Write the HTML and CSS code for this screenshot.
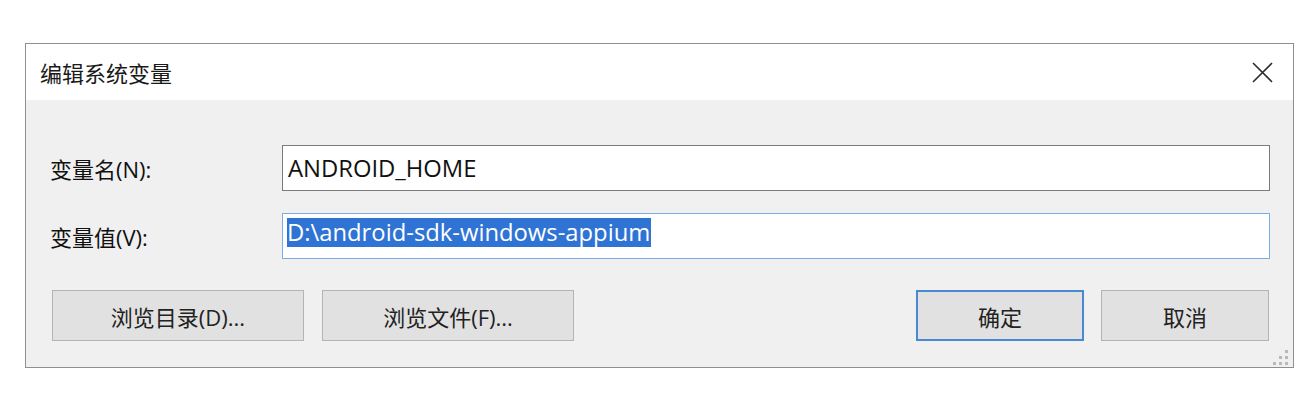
FILE: index.html
```html
<!DOCTYPE html>
<html lang="zh-CN">
<head>
  <meta charset="UTF-8" />
  <title>编辑系统变量</title>
  <link rel="stylesheet" href="styles.css">
</head>
<body>
  <div class="page">
    <div class="dialog">
      <!-- Barra de título -->
      <div class="titlebar">
        <span class="title">编辑系统变量</span>
        <span class="close">
          <svg width="21" height="21" viewBox="0 0 21 21">
            <path d="M1 1 L20 20 M20 1 L1 20" stroke="#2b2b2b" stroke-width="1.6" fill="none" />
          </svg>
        </span>
      </div>

      <!-- Contenido -->
      <div class="body">
        <div class="row">
          <label class="label">变量名(N):</label>
          <div class="field">ANDROID_HOME</div>
        </div>
        <div class="row row-value">
          <label class="label">变量值(V):</label>
          <div class="field focused"><span class="selected">D:\android-sdk-windows-appium</span></div>
        </div>

        <div class="actions">
          <div class="group">
            <button class="btn wide">浏览目录(D)...</button>
            <button class="btn wide">浏览文件(F)...</button>
          </div>
          <div class="group">
            <button class="btn default">确定</button>
            <button class="btn">取消</button>
          </div>
        </div>

        <!-- Agarre de redimensionado -->
        <svg class="grip" width="16" height="16" viewBox="0 0 16 16">
          <rect x="12" y="0" width="3" height="3" />
          <rect x="6" y="6" width="3" height="3" />
          <rect x="12" y="6" width="3" height="3" />
          <rect x="0" y="12" width="3" height="3" />
          <rect x="6" y="12" width="3" height="3" />
          <rect x="12" y="12" width="3" height="3" />
        </svg>
      </div>
    </div>
  </div>
</body>
</html>
```

FILE: styles.css
```css
/* Estilos generales */
body {
  margin: 0;
  background-color: #ffffff;
  font-family: "Open Sans", "Noto Sans CJK SC", sans-serif;
  color: #111;
}

.page {
  padding: 43px 0 0 25px;
}

.dialog {
  width: 1269px;
  box-sizing: border-box;
  border: 1px solid #8f8f8f;
  background-color: #f0f0f0;
}

.titlebar {
  height: 56px;
  background-color: #ffffff;
  display: flex;
  align-items: center;
  justify-content: space-between;
  padding: 0 20px 0 14px;
}

.title {
  font-size: 22px;
  color: #1a1a1a;
}

.close {
  display: flex;
  margin-top: 1px;
}

.body {
  position: relative;
  padding: 45px 23px 26px 24px;
}

.row {
  display: flex;
  align-items: center;
}

.row-value {
  margin-top: 22px;
}

.label {
  width: 232px;
  flex: none;
  font-size: 22px;
  color: #111;
}

.field {
  flex: 1;
  height: 46px;
  box-sizing: border-box;
  border: 1px solid #7a7a7a;
  background-color: #ffffff;
  padding-left: 5px;
  font-size: 23.8px;
  line-height: 44px;
  color: #111;
}

.field.focused {
  border-color: #78ade6;
  padding: 4px 0 0 4px;
  line-height: 29px;
}

.selected {
  display: inline-block;
  background-color: #2f74d4;
  color: #ffffff;
  line-height: 29px;
  padding-right: 1px;
}

.actions {
  display: flex;
  justify-content: space-between;
  margin-top: 31px;
  padding: 0 1px 0 2px;
}

.group {
  display: flex;
  gap: 17px;
}

.group:first-child {
  gap: 18px;
}

.btn {
  width: 168px;
  height: 51px;
  box-sizing: border-box;
  border: 1px solid #b4b4b4;
  background-color: #e1e1e1;
  font-family: "Open Sans", "Noto Sans CJK SC", sans-serif;
  font-size: 22px;
  color: #222;
  padding: 0;
}

.btn.wide {
  width: 252px;
}

.btn.default {
  border: 2px solid #4a88d2;
}

.grip {
  position: absolute;
  right: 4px;
  bottom: 1px;
  fill: #b9b9b9;
}
```
